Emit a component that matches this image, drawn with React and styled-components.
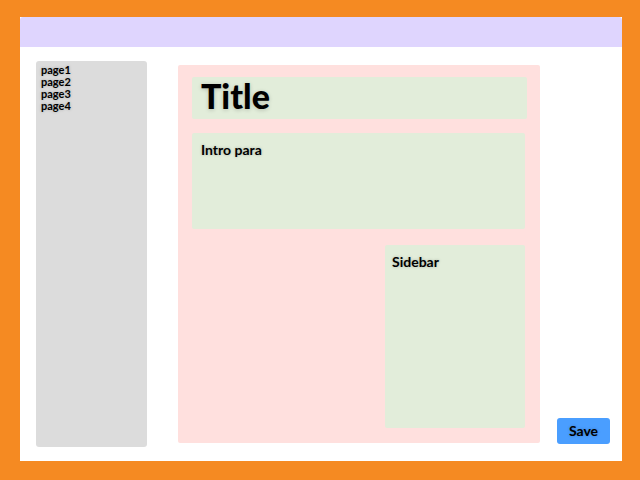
import React from 'react';
import styled, { createGlobalStyle } from 'styled-components';

const GlobalStyle = createGlobalStyle`
	* {
		box-sizing: border-box;
	}
	body {
		margin: 0;
		background: #f58a22;
		font-family: Lato, 'Open Sans', sans-serif;
		font-weight: 700;
		color: #000;
	}
`;

const pages = ['page1', 'page2', 'page3', 'page4'];

const App = () => (
	<>
		<GlobalStyle />
		<Frame>
			<Card>
				<Header />
				<Body>
					<Nav>
						{pages.map((page) => (
							<NavItem key={page}>{page}</NavItem>
						))}
					</Nav>
					<Main>
						<Title>Title</Title>
						<Intro>Intro para</Intro>
						<Sidebar>Sidebar</Sidebar>
					</Main>
					<SaveButton type='button'>Save</SaveButton>
				</Body>
			</Card>
		</Frame>
	</>
);

const Frame = styled.div`
	height: 480px;
	padding: 17px 18px 19px 20px;
`;

const Card = styled.div`
	height: 100%;
	display: flex;
	flex-direction: column;
	background: #fff;
`;

const Header = styled.header`
	height: 30px;
	flex-shrink: 0;
	background: #dfd5fe;
	border-radius: 3px 3px 0 0;
`;

const Body = styled.div`
	flex: 1;
	display: flex;
	padding: 14px 12px 14px 16px;
`;

const Nav = styled.nav`
	width: 111px;
	flex-shrink: 0;
	padding: 3px 5px;
	background: #dcdcdc;
	border-radius: 3px;
`;

const NavItem = styled.div`
	font-size: 11px;
	line-height: 12px;
	text-shadow: 0 0 3px rgba(0, 0, 0, 0.25);
`;

const Main = styled.main`
	width: 362px;
	height: 378px;
	margin-left: 31px;
	align-self: center;
	display: flex;
	flex-direction: column;
	padding: 12px 15px 15px 14px;
	background: #ffe0de;
	border-radius: 2px;
`;

const Block = styled.div`
	background: #e2edda;
	border-radius: 2px;
	font-size: 14px;
	text-shadow: 0 0 3px rgba(0, 0, 0, 0.25);
`;

const Title = styled(Block)`
	height: 42px;
	margin: 0 -2px 14px 0;
	padding: 2px 9px 0;
	font-size: 34px;
	line-height: 34px;
	font-weight: 900;
	text-shadow: 0 1px 4px rgba(0, 0, 0, 0.2);
`;

const Intro = styled(Block)`
	height: 96px;
	margin-bottom: 16px;
	padding: 8px 9px;
`;

const Sidebar = styled(Block)`
	flex: 1;
	width: 140px;
	margin-left: auto;
	padding: 8px 7px;
`;

const SaveButton = styled.button`
	width: 53px;
	height: 26px;
	margin: 0 0 3px 17px;
	align-self: flex-end;
	flex-shrink: 0;
	padding: 0 0 2px;
	border: none;
	border-radius: 3px;
	background: #4a9eff;
	font-family: Lato, 'Open Sans', sans-serif;
	font-size: 14px;
	font-weight: 700;
	color: #000;
	text-shadow: 0 0 3px rgba(0, 0, 0, 0.25);
`;

export default App;
